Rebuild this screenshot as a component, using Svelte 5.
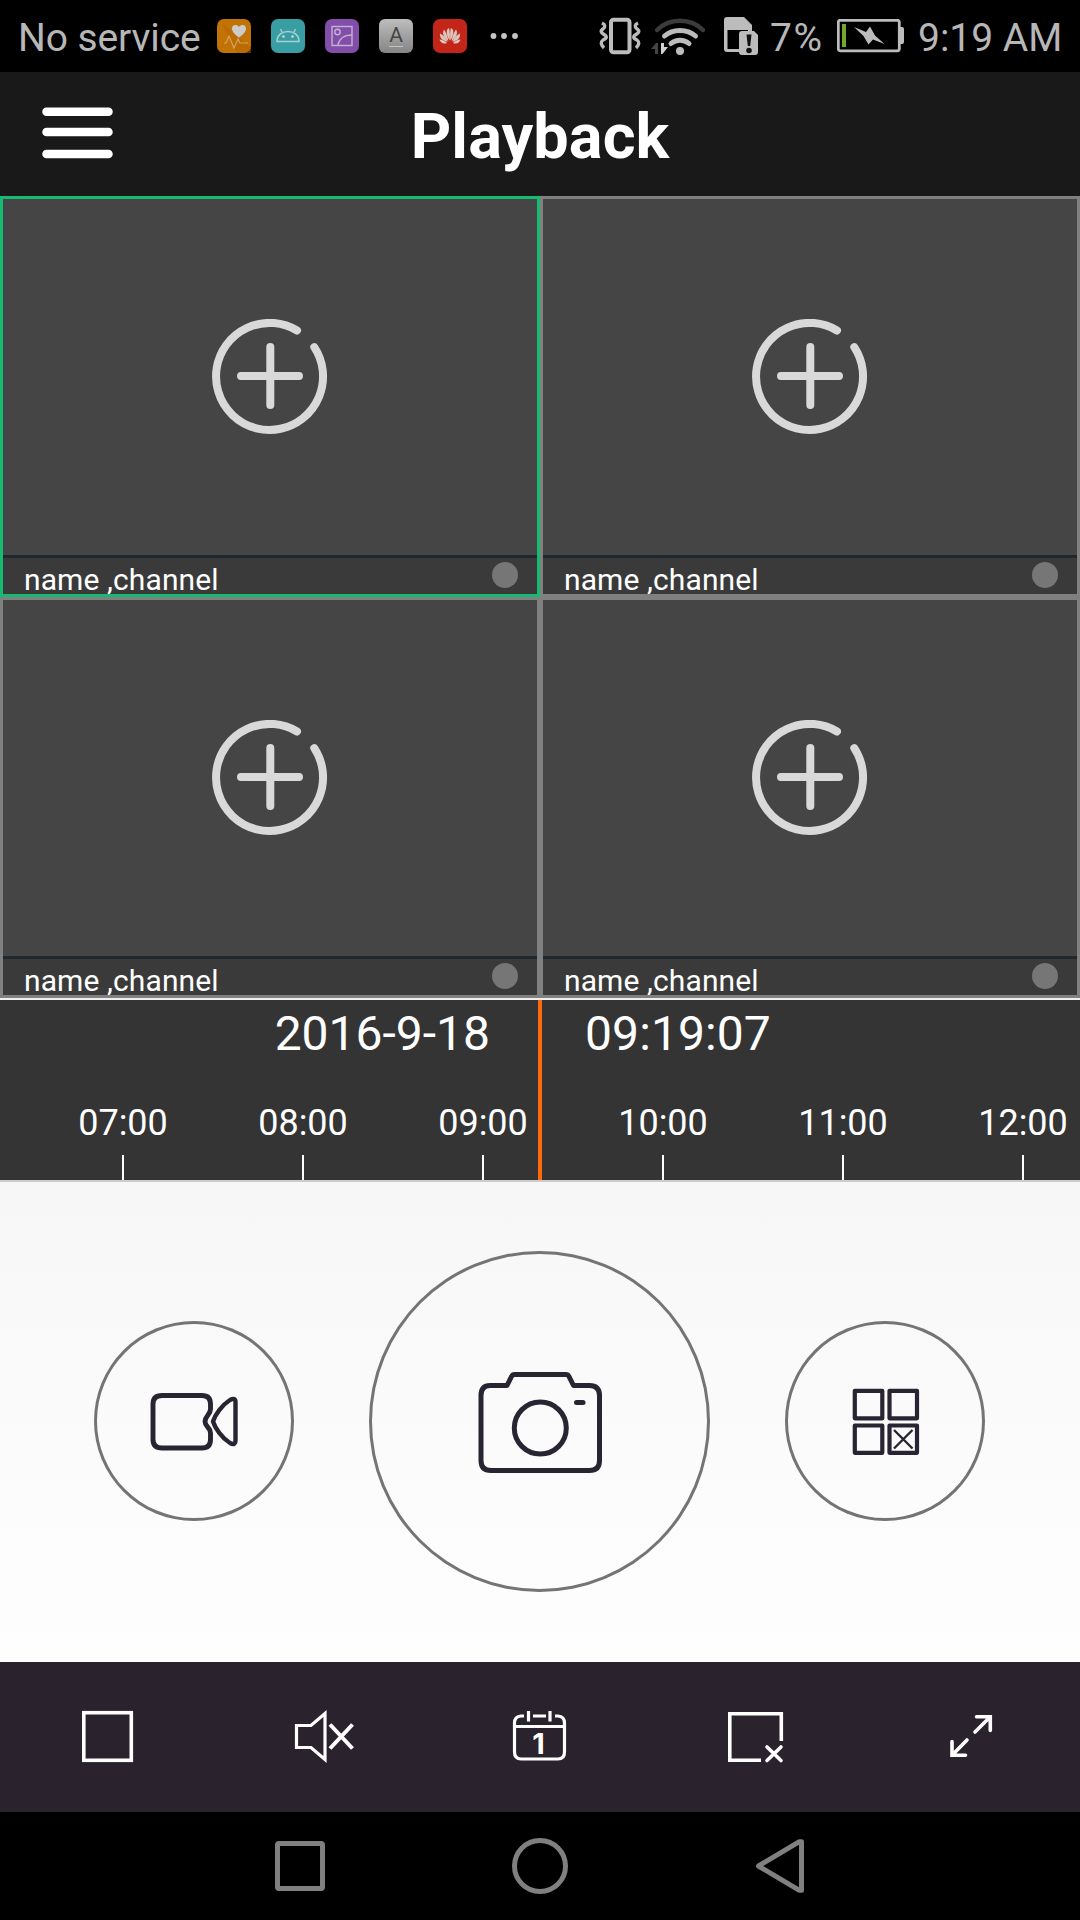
<script>
  let channels = [
    { id: 1, label: 'name ,channel' },
    { id: 2, label: 'name ,channel' },
    { id: 3, label: 'name ,channel' },
    { id: 4, label: 'name ,channel' }
  ];
  let selected = 1;

  const date = '2016-9-18';
  const time = '09:19:07';
  const hours = ['07:00', '08:00', '09:00', '10:00', '11:00', '12:00'];
</script>

<div class="screen">
  <div class="status-bar">
    <span class="carrier">No service</span>
    <div class="app-icons">
      <svg viewBox="0 0 34 34">
        <rect width="34" height="34" rx="7" fill="#c17305" />
        <path d="M5 4L34 29V34H20z" fill="#b56400" opacity=".5" />
        <path d="M22 18.500C17 15 15 12 15 9.500C15 5.500 20 5 22 8C24 5 29 5.500 29 9.500C29 12 27 15 22 18.500z" fill="#ccc" />
        <path d="M7 24H9L12 17L17 29L21 20L23 24H31" fill="none" stroke="#d9a25a" stroke-width="1.200" />
      </svg>
      <svg viewBox="0 0 34 34">
        <rect width="34" height="34" rx="7" fill="#399ea3" />
        <g fill="none" stroke="#a9cfd1" stroke-width="1.500">
          <path d="M6 22.500C6 9 28 9 28 22.500zM11 13L9.500 10M23 13L24.500 10" />
        </g>
        <circle cx="12.500" cy="17.500" r="1.300" fill="#c0dcdd" />
        <circle cx="21.500" cy="17.500" r="1.300" fill="#c0dcdd" />
      </svg>
      <svg viewBox="0 0 34 34">
        <rect width="34" height="34" rx="7" fill="#824eaa" />
        <g fill="none" stroke="#c4b2d2" stroke-width="1.400">
          <rect x="7" y="7.500" width="20" height="19" />
          <circle cx="12.500" cy="13" r="2.700" />
          <path d="M13 26C14 20 19 16 27 16" />
        </g>
      </svg>
      <svg viewBox="0 0 34 34">
        <defs>
          <linearGradient id="silver" x2="0" y2="1">
            <stop stop-color="#bdbdbd" />
            <stop offset="1" stop-color="#858585" />
          </linearGradient>
        </defs>
        <rect width="34" height="34" rx="6" fill="url(#silver)" />
        <text x="17" y="23" text-anchor="middle" font-size="21" fill="#444">A</text>
        <path d="M10 27.500H24" stroke="#c4c4c4" />
      </svg>
      <svg viewBox="0 0 34 34">
        <defs>
          <g id="petals" fill="#ddc5bd">
            <path d="M16.600 21.500C13 16 12.600 10.500 16 9C17 12 17.100 17 16.600 21.500z" />
            <path d="M15.300 22C10.500 18.500 8.800 14 11 10.500C12.500 12.500 14.800 17.500 15.300 22z" />
            <path d="M14.600 22.800C9 21.500 6.300 18.500 7 14.500C9.500 15.500 13 19 14.600 22.800z" />
            <path d="M14 24C10 25.500 7.200 23.500 6.500 20.500C9 20.500 12 22 14 24z" />
          </g>
        </defs>
        <rect width="34" height="34" rx="7" fill="#c32619" />
        <use href="#petals" />
        <use href="#petals" transform="matrix(-1 0 0 1 34 0)" />
      </svg>
    </div>
    <svg class="more" width="28" height="8" viewBox="0 0 28 8">
      <circle cx="3.500" cy="4" r="2.900" />
      <circle cx="14" cy="4" r="2.900" />
      <circle cx="25" cy="4" r="2.900" />
    </svg>
    <div class="indicators">
      <svg width="42" height="38" viewBox="599 17 42 38" fill="none" stroke="#bcbcbc">
        <rect x="611" y="19.800" width="18.500" height="32.500" rx="2.500" stroke-width="4" />
        <path d="M602 23q5 2.500 1 6q-4 2.500 1 5.500t-1 5.500q-4 3 1 8M638 23q-5 2.500-1 6q4 2.500-1 5.500t1 5.500q4 3-1 8" stroke-width="3.400" />
      </svg>
      <svg class="wifi" width="57" height="40" viewBox="650 16 57 40" fill="none" stroke="#bcbcbc" stroke-width="5" stroke-linecap="round">
        <path d="M657 30C669 17.500 691 17.500 703 30" stroke="#3b3b3b" stroke-width="4.500" />
        <path d="M664.500 36C673 28.500 687 28.500 695.500 36" />
        <path d="M671 43.500C676 39 684 39 689 43.500" />
        <circle cx="680" cy="51" r="4" fill="#bcbcbc" stroke="none" />
        <path d="M651 49L656 43H658V54H655V49z" fill="#444" stroke="none" />
        <path d="M661 43H664V47H668L662.500 54H661z" fill="#d0d0d0" stroke="none" />
      </svg>
      <svg class="sim" width="35" height="39" viewBox="723 17 35 39">
        <path d="M727 17H744L752 25V31H748V30H727.500V49H739V52H727Q724 52 724 49V20Q724 17 727 17z" fill="#bcbcbc" />
        <path d="M742 31H754L758 35V52Q758 55 755 55H742Q739 55 739 52V34Q739 31 742 31z" fill="#bcbcbc" />
        <path d="M746.500 34.500H751.500L750.200 46H747.800z" fill="#111" />
        <circle cx="749" cy="50.500" r="2.800" fill="#111" />
      </svg>
      <span class="percent">7%</span>
      <svg class="battery" width="67" height="34" viewBox="837 20 67 34">
        <rect x="838.300" y="21.300" width="61" height="30.500" rx="2" fill="none" stroke="#bcbcbc" stroke-width="2.800" />
        <path d="M900 28H902Q904 28 904 30V43Q904 45 902 45H900z" fill="#bcbcbc" />
        <rect x="842" y="25" width="4" height="23" fill="#76a82c" />
        <path d="M854 28L866 33L870 27.500L875 36.500L884.500 45L873 40.500L868.500 45.500L863.500 37z" fill="#bcbcbc" />
      </svg>
      <span class="clock">9:19 AM</span>
    </div>
  </div>

  <header>
    <button class="menu" aria-label="Menu">
      <svg width="71" height="52" viewBox="0 0 71 52" stroke="#fff" stroke-width="8.500" stroke-linecap="round">
        <path d="M4.500 4.800H66.500M4.500 25H66.500M4.500 47H66.500" />
      </svg>
    </button>
    <h1>Playback</h1>
  </header>

  <div class="grid">
    {#each channels as channel}
      <button class="cell" class:selected={channel.id === selected} on:click={() => (selected = channel.id)}>
        <span class="preview">
          <svg width="116" height="116" viewBox="0.5 0.5 116 116" fill="none" stroke="#d9d9d9" stroke-width="8" stroke-linecap="round">
            <path d="M85.500 12A53.500 53.500 0 1 0 102.800 28.600" />
            <path d="M29.500 57.500H87.500M58.800 28.500V86.500" />
          </svg>
        </span>
        <span class="caption">
          <span class="name">{channel.label}</span>
          <span class="dot"></span>
        </span>
      </button>
    {/each}
  </div>

  <div class="timeline">
    <div class="stamp">
      <span class="date">{date}</span>
      <span class="time">{time}</span>
    </div>
    <div class="hours">
      {#each hours as hour}
        <div class="hour">
          <span>{hour}</span>
          <i></i>
        </div>
      {/each}
    </div>
    <div class="needle"></div>
  </div>

  <div class="controls">
    <button class="round" aria-label="Record">
      <svg viewBox="94 1321 200 200" fill="none" stroke="#282432" stroke-width="4.900" stroke-linejoin="round">
        <path d="M162 1395.500H202Q210.500 1395.500 210.500 1404V1409C210.500 1415 205 1416 205 1421.500C205 1427 210.500 1427 210.500 1433V1439.500Q210.500 1448 202 1448H162Q153 1448 153 1439.500V1404Q153 1395.500 162 1395.500z" />
        <path d="M213 1421.500C215 1415 222 1405 230 1400Q235.500 1397 235.500 1402V1440Q235.500 1446 230 1443C222 1438 215 1428 213 1421.500z" stroke-width="4.400" />
      </svg>
    </button>
    <button class="round large" aria-label="Snapshot">
      <svg viewBox="369 1250.5 341 341" fill="none" stroke="#282432" stroke-width="5" stroke-linejoin="round" stroke-linecap="round">
        <path d="M490 1385H507L511.500 1376Q512.500 1374 514.500 1374H566Q568 1374 569 1376L573.500 1385H589.500Q599.500 1385 599.500 1395V1460Q599.500 1470 589.500 1470H491Q481 1470 481 1460V1395Q481 1385 490 1385z" />
        <circle cx="540.300" cy="1427.500" r="26" />
        <path d="M576.500 1402H583" />
      </svg>
    </button>
    <button class="round" aria-label="Close all channels">
      <svg viewBox="785 1321 200 200" fill="none" stroke="#282432" stroke-width="4.200" stroke-linejoin="round">
        <path d="M854.800 1390.800H882.300V1418.300H854.800zM889.500 1390.800H917V1418.300H889.500zM854.800 1425.500H882.300V1452.800H854.800zM889.500 1425.500H917V1452.800H889.500z" />
        <path d="M894 1430L912.500 1448.500M912.500 1430L894 1448.500" stroke-width="2.400" />
      </svg>
    </button>
  </div>

  <div class="toolbar">
    <button aria-label="Stop">
      <svg viewBox="72 1701 72 72">
        <rect x="83.800" y="1712.700" width="47.500" height="47.600" />
      </svg>
    </button>
    <button aria-label="Mute">
      <svg class="mute" viewBox="288 1701 72 72">
        <path d="M296.500 1725.500H311L325 1713.500V1759.500L311 1747.500H296.500z" />
        <path d="M330 1724.500L352.500 1748.500M352.500 1724.500L330 1748.500" stroke-width="4" />
      </svg>
    </button>
    <button aria-label="Calendar">
      <svg class="calendar" viewBox="504 1701 72 72">
        <path d="M524 1716H521Q514.500 1716.500 514.500 1723V1752Q514.500 1759 521 1759H558Q564.500 1759 564.500 1752V1723Q564.500 1716.500 558 1716H555M533 1716H546M515 1726.500H564" />
        <path d="M528.500 1711V1721.500M550 1711V1721.500" />
        <text x="538.500" y="1754" text-anchor="middle">1</text>
      </svg>
    </button>
    <button aria-label="Close window">
      <svg viewBox="720 1701 72 72">
        <path d="M761 1760.300H729.800V1713.800H781.300V1741" />
        <path d="M767 1747L781 1760.500M781 1747L767 1760.500" stroke-linecap="round" />
      </svg>
    </button>
    <button aria-label="Fullscreen">
      <svg viewBox="936 1701 72 72" stroke-linecap="round">
        <path d="M976.500 1716.800H990.300V1730.500M989.500 1717.500L975 1732M952 1741.500V1755.300H965.500M952.800 1754.500L967 1740" />
      </svg>
    </button>
  </div>

  <nav>
    <svg viewBox="0 0 60 60"><rect x="7.500" y="7.500" width="45" height="45" rx="1.500" /></svg>
    <svg viewBox="0 0 60 60"><circle cx="30" cy="30" r="25.500" /></svg>
    <svg viewBox="0 0 60 60"><path d="M8.500 30L49 5.800H51.500V54.200H49z" stroke-linejoin="round" /></svg>
  </nav>
</div>

<style>
  :global(body) {
    background: #000;
  }

  .screen {
    width: 1080px;
    height: 1920px;
    display: flex;
    flex-direction: column;
    overflow: hidden;
    font-family: Roboto, sans-serif;
    color: #fff;
  }

  button {
    padding: 0;
    border: none;
    background: none;
    font: inherit;
    color: inherit;
  }

  svg {
    display: block;
    flex: none;
  }

  .status-bar {
    display: flex;
    align-items: center;
    height: 72px;
    padding: 0 19px 0 18px;
    background: #000;
    color: #b7b7b7;
    font-size: 39px;
    line-height: 68px;
    white-space: nowrap;
  }

  .carrier {
    width: 199px;
    padding-top: 4px;
    letter-spacing: -0.1px;
  }

  .app-icons {
    display: flex;
    gap: 20px;
  }

  .app-icons svg {
    width: 34px;
    height: 34px;
  }

  .more {
    margin-left: 23px;
    fill: #c4c4c4;
  }

  .indicators {
    display: flex;
    align-items: center;
    margin-left: auto;
  }

  .wifi {
    margin-left: 9px;
  }

  .sim {
    margin-left: 16px;
  }

  .percent {
    width: 67px;
    padding: 4px 0 0 12px;
    box-sizing: border-box;
    letter-spacing: 1.6px;
  }

  .battery {
    margin-left: 12px;
  }

  .clock {
    width: 143px;
    margin-left: 14px;
    padding-top: 4px;
  }

  header {
    display: grid;
    grid-template-columns: 155px 1fr 155px;
    align-items: center;
    height: 124px;
    background: #191919;
  }

  .menu {
    width: 71px;
    margin: 0 0 2px 42px;
  }

  h1 {
    margin: 5px 0 0;
    font-size: 63px;
    font-weight: 700;
    line-height: 74px;
    letter-spacing: 0.1px;
    text-align: center;
  }

  .grid {
    display: grid;
    grid-template-columns: 540px 540px;
    grid-auto-rows: 401px;
  }

  .cell {
    display: flex;
    flex-direction: column;
    min-width: 0;
    border: 3px solid #808080;
    background: #454545;
    overflow: hidden;
  }

  .cell.selected {
    border-color: #14bb70;
  }

  .preview {
    display: flex;
    align-items: center;
    justify-content: center;
    width: 100%;
    height: 356px;
  }

  .caption {
    display: flex;
    justify-content: space-between;
    align-items: flex-start;
    width: 100%;
    height: 39px;
    padding: 0 19px 0 21px;
    border-top: 3px solid #20282d;
    background: #3a3a3a;
    box-sizing: border-box;
  }

  .name {
    margin-top: 8px;
    font-size: 30px;
    line-height: 28px;
    letter-spacing: 0.1px;
  }

  .dot {
    width: 26px;
    height: 26px;
    margin-top: 4px;
    border-radius: 50%;
    background: #767676;
  }

  .timeline {
    position: relative;
    height: 180px;
    border-top: 2px solid #efefef;
    border-bottom: 2px solid #ccc;
    background: #343434;
  }

  .stamp {
    display: flex;
    height: 108px;
    font-size: 48px;
    line-height: 68px;
  }

  .date {
    width: 490px;
    text-align: right;
  }

  .time {
    margin-left: 95px;
    letter-spacing: 0.1px;
  }

  .hours {
    display: flex;
    padding-left: 33px;
  }

  .hour {
    flex: none;
    display: flex;
    flex-direction: column;
    align-items: center;
    width: 180px;
    height: 72px;
    font-size: 36px;
    line-height: 30px;
  }

  .hour i {
    width: 2px;
    height: 25px;
    margin-top: auto;
    background: #fff;
  }

  .needle {
    position: absolute;
    top: 0;
    left: 538px;
    width: 4px;
    height: 180px;
    background: #ff6a0a;
  }

  .controls {
    display: flex;
    align-items: center;
    justify-content: space-between;
    height: 480px;
    padding: 0 95px 2px 94px;
    box-sizing: border-box;
    background: linear-gradient(#f7f7f7, #fefefe);
  }

  .round {
    width: 200px;
    height: 200px;
    border-radius: 50%;
    box-shadow: inset 0 0 0 3px #747474;
  }

  .round.large {
    width: 341px;
    height: 341px;
  }

  .toolbar {
    display: grid;
    grid-template-columns: repeat(5, 216px);
    height: 150px;
    background: #2a222d;
  }

  .toolbar button {
    display: flex;
    align-items: center;
    justify-content: center;
  }

  .toolbar svg {
    width: 72px;
    height: 72px;
    fill: none;
    stroke: #fff;
    stroke-width: 3.6px;
  }

  .toolbar .mute,
  .toolbar .calendar {
    stroke-width: 3.2px;
  }

  .toolbar text {
    fill: #fff;
    stroke: none;
    font-family: Inter, Roboto, sans-serif;
    font-size: 29px;
    font-weight: 700;
  }

  nav {
    display: flex;
    align-items: center;
    justify-content: center;
    gap: 180px;
    height: 108px;
    background: #000;
  }

  nav svg {
    width: 60px;
    height: 60px;
    fill: none;
    stroke: #808080;
    stroke-width: 5px;
  }
</style>
